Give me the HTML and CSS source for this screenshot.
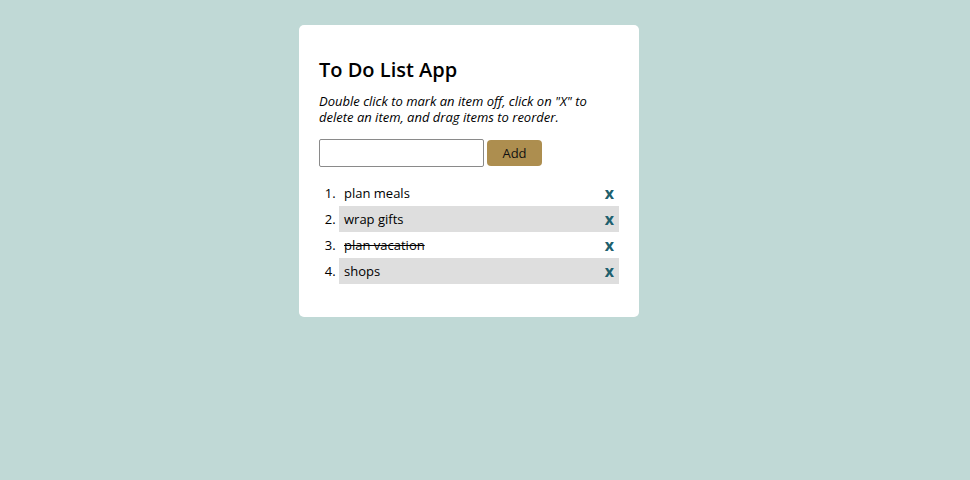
FILE: index.html
```html
<!DOCTYPE html>
<html>
<head>
<meta charset="utf-8">
<link rel="stylesheet" href="styles.css">
</head>
<body>
<div class="page">
  <div class="card">
    <h1 class="title">To Do List App</h1>
    <p class="desc">Double click to mark an item off, click on "X" to delete an item, and drag items to reorder.</p>
    <form class="add-form">
      <input class="add-input" type="text">
      <button class="add-btn" type="button">Add</button>
    </form>
    <ol class="list">
      <li class="item"><span class="item-text">plan meals</span><span class="del">x</span></li>
      <li class="item alt"><span class="item-text">wrap gifts</span><span class="del">x</span></li>
      <li class="item"><span class="item-text done">plan vacation</span><span class="del">x</span></li>
      <li class="item alt"><span class="item-text">shops</span><span class="del">x</span></li>
    </ol>
  </div>
</div>
</body>
</html>
```
FILE: styles.css
```css
html, body {
  margin: 0;
  padding: 0;
  background: #c0d9d6;
  font-family: "Open Sans", "Liberation Sans", sans-serif;
  color: #000;
}
.page {
  display: flex;
  justify-content: center;
  padding-top: 25px;
  padding-right: 32px;
}
.card {
  width: 300px;
  background: #fff;
  border-radius: 5px;
  padding: 20px 20px 20px 20px;
}
.title {
  font-size: 20px;
  font-weight: 600;
  margin: 11px 0 10px 0;
  line-height: 27px;
}
.desc {
  font-size: 13px;
  font-style: italic;
  line-height: 16px;
  margin: 0 0 14px 0;
}
.add-form {
  display: flex;
  align-items: center;
  gap: 3px;
  margin: 0;
}
.add-input {
  width: 165px;
  height: 28px;
  box-sizing: border-box;
  border: 1px solid #8a8a8a;
  border-radius: 2px;
  margin: 0;
  padding: 2px 4px;
  font-family: inherit;
}
.add-btn {
  width: 55px;
  height: 26px;
  background: #ad8e4f;
  border: none;
  border-radius: 4px;
  font-family: inherit;
  font-size: 13px;
  color: #111;
  padding: 0;
}
.list {
  margin: 13px 0 13px 0;
  padding: 0 0 0 20px;
  font-size: 13px;
}
.item {
  height: 26px;
  line-height: 26px;
  padding: 0 5px;
  display: list-item;
}
.item.alt {
  background: #dedede;
}
.item-text.done {
  text-decoration: line-through;
}
.del {
  float: right;
  font-weight: 700;
  font-size: 16px;
  color: #20606e;
}
```
